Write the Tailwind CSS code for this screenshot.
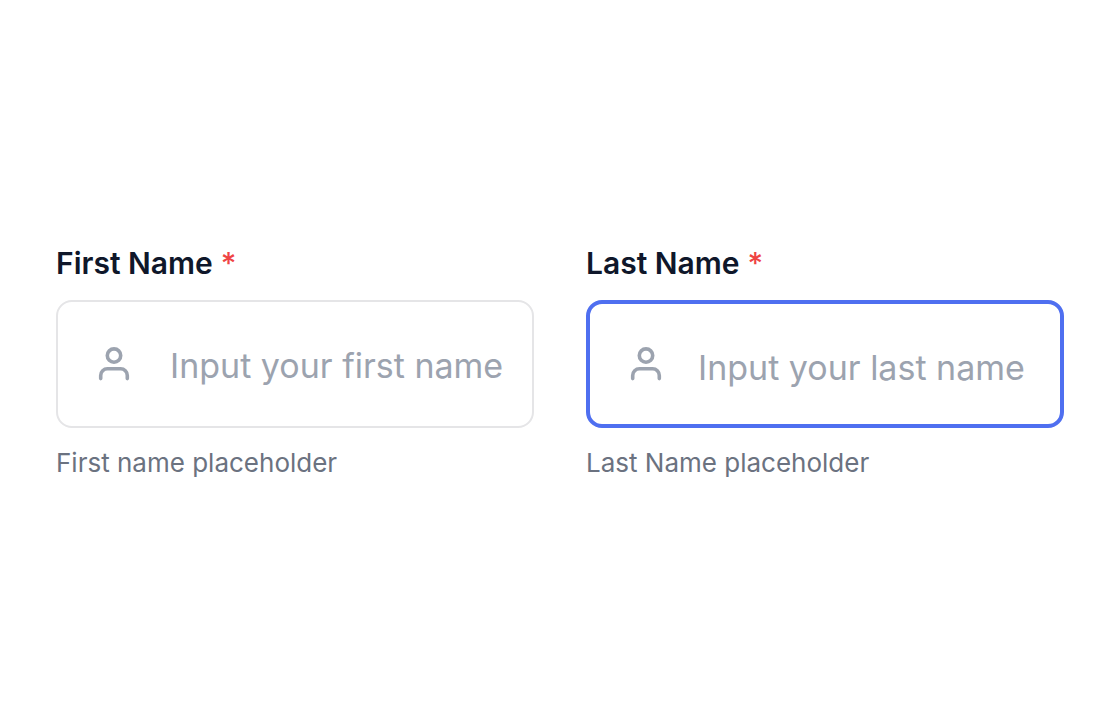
<!DOCTYPE html>
<html lang="en">
<head>
    <meta charset="UTF-8" />
    <meta name="viewport" content="width=device-width, initial-scale=1.0"/>
    <title>Name Fields</title>
    <script src="https://cdn.jsdelivr.net/npm/@tailwindcss/browser@4"></script>
</head>
<body class="bg-white font-[Inter,sans-serif]">
    <main class="min-h-screen flex items-center px-14 pt-1.5">
        <form class="w-full grid grid-cols-2 gap-[52px]">
            <!-- First name -->
            <div class="flex flex-col">
                <label for="firstName" class="text-[30px] leading-[38px] font-semibold text-[#0f172a]">First Name<span class="font-medium text-[#ef4444]"> *</span></label>
                <div class="mt-[18px] h-32 flex items-center rounded-2xl border-2 border-[#e5e5e7] pl-9">
                    <svg class="size-10 shrink-0 text-[#9ca3af]" viewBox="0 0 40 40" fill="none" stroke="currentColor" stroke-width="3.6" stroke-linecap="round" stroke-linejoin="round" aria-hidden="true">
                        <circle cx="20" cy="11.6" r="6.7"/>
                        <path d="M6.7 34.6v-3.2a6.7 6.7 0 0 1 6.7-6.7h13.2a6.7 6.7 0 0 1 6.7 6.7v3.2"/>
                    </svg>
                    <input id="firstName" type="text" placeholder="Input your first name" aria-describedby="firstNameHint" class="ml-9 pt-1 min-w-0 flex-1 text-[34px] leading-12 outline-none placeholder:text-[#9ca3af]" />
                </div>
                <p id="firstNameHint" class="mt-4 text-[26px] leading-[38px] text-[#6b7280]">First name placeholder</p>
            </div>

            <!-- Last name (active) -->
            <div class="flex flex-col">
                <label for="lastName" class="text-[30px] leading-[38px] font-semibold text-[#0f172a]">Last Name<span class="font-medium text-[#ef4444]"> *</span></label>
                <div class="mt-[18px] h-32 flex items-center rounded-2xl border-4 border-[#4f6ff0] pl-9">
                    <svg class="size-10 shrink-0 text-[#9ca3af]" viewBox="0 0 40 40" fill="none" stroke="currentColor" stroke-width="3.6" stroke-linecap="round" stroke-linejoin="round" aria-hidden="true">
                        <circle cx="20" cy="11.6" r="6.7"/>
                        <path d="M6.7 34.6v-3.2a6.7 6.7 0 0 1 6.7-6.7h13.2a6.7 6.7 0 0 1 6.7 6.7v3.2"/>
                    </svg>
                    <input id="lastName" type="text" placeholder="Input your last name" aria-describedby="lastNameHint" class="ml-8 pt-2 min-w-0 flex-1 text-[34px] leading-12 outline-none placeholder:text-[#9ca3af]" />
                </div>
                <p id="lastNameHint" class="mt-4 text-[26px] leading-[38px] text-[#6b7280]">Last Name placeholder</p>
            </div>
        </form>
    </main>
</body>
</html>
